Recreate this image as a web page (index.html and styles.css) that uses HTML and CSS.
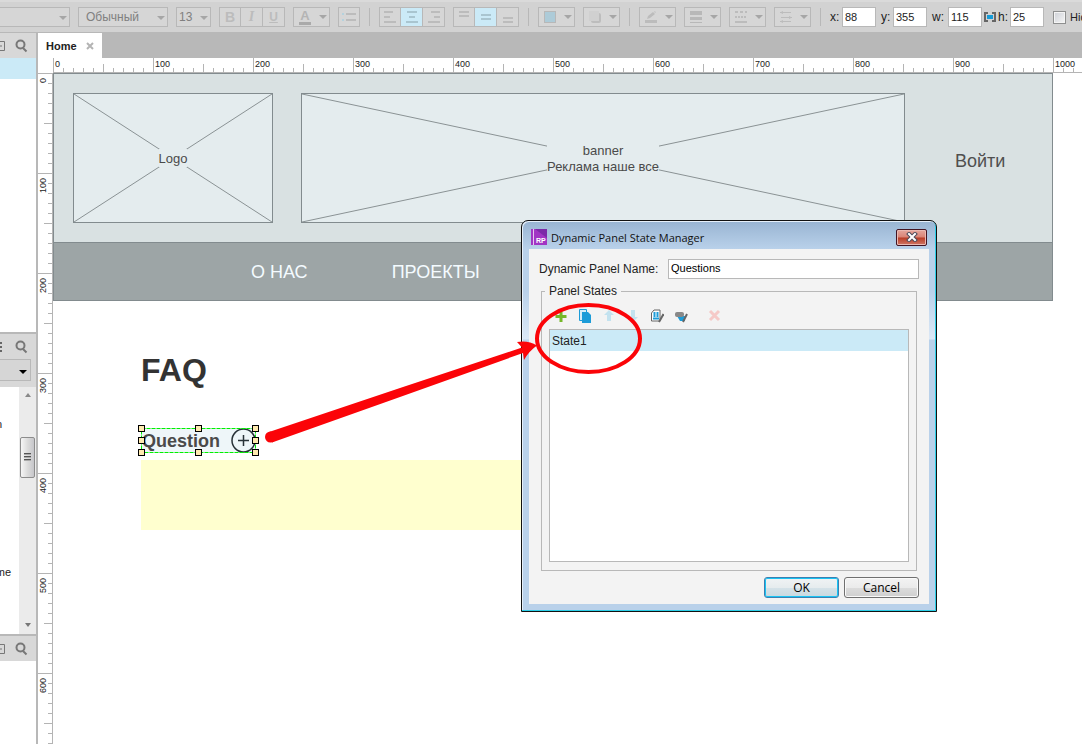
FILE: index.html
```html
<!DOCTYPE html>
<html lang="ru">
<head>
<meta charset="utf-8">
<title>Home</title>
<link rel="stylesheet" href="styles.css">
</head>
<body>
<header class="toolbar">
  <div class="dropdown dropdown-first"><select aria-label="Font"><option></option></select></div>
  <div class="dropdown dropdown-weight"><select aria-label="Weight"><option>Обычный</option></select></div>
  <div class="dropdown dropdown-size"><select aria-label="Size"><option>13</option></select></div>
  <div class="group">
    <button class="tool bold" aria-label="Bold">B</button>
    <button class="tool italic" aria-label="Italic">I</button>
    <button class="tool underline" aria-label="Underline">U</button>
  </div>
  <button class="menu-button" aria-label="Text color"><span class="font-color">A</span></button>
  <div class="group"><button class="tool" aria-label="Bullets"><svg width="14" height="12"><path d="M4 3h10M4 9h10" class="gray"/><path d="M0 3h2M0 9h2" class="blue"/></svg></button></div>
  <span class="divider"></span>
  <div class="group">
    <button class="tool" aria-label="Align left"><svg width="12" height="12"><path d="M0 1h9M0 6h6M0 11h12" class="gray"/></svg></button>
    <button class="tool active" aria-label="Align center"><svg width="12" height="12"><path d="M1 1h10M3 6h6M0 11h12" class="gray"/></svg></button>
    <button class="tool" aria-label="Align right"><svg width="12" height="12"><path d="M3 1h9M6 6h6M0 11h12" class="gray"/></svg></button>
  </div>
  <div class="group">
    <button class="tool" aria-label="Align top"><svg width="12" height="12"><path d="M1 1h10M1 5h10" class="gray"/></svg></button>
    <button class="tool active" aria-label="Align middle"><svg width="12" height="12"><path d="M1 4h10M1 8h10" class="gray"/></svg></button>
    <button class="tool" aria-label="Align bottom"><svg width="12" height="12"><path d="M1 7h10M1 11h10" class="gray"/></svg></button>
  </div>
  <span class="divider"></span>
  <button class="menu-button" aria-label="Fill"><svg width="14" height="12"><rect x="1.500" y=".5" width="11" height="11" fill="#adcbd8" stroke="#b8b8b8"/></svg></button>
  <button class="menu-button" aria-label="Shadow"><svg width="14" height="12"><rect x="3" y="2" width="10" height="10" rx="2" fill="#bdbdbd"/><rect x="1" y="0" width="10" height="10" fill="#d0d0d0"/></svg></button>
  <span class="divider"></span>
  <button class="menu-button" aria-label="Line color"><svg width="14" height="12"><path d="M1 9h12v3H1z" fill="#bcbcbc"/><path d="M3 8l1-3 5-4 2 2-5 4zM10 0l2 1-1 1z" fill="#bcbcbc"/></svg></button>
  <button class="menu-button" aria-label="Line width"><svg width="14" height="12"><path d="M1 0h12v4H1zM1 6h12v3H1zM1 11h12v1H1z" fill="#b8b8b8"/></svg></button>
  <button class="menu-button" aria-label="Line style"><svg width="14" height="12"><path d="M1 1h12" class="gray" stroke-dasharray="3 2"/><path d="M1 6h12" class="gray" stroke-dasharray="2 1"/><path d="M1 11h12" class="gray"/></svg></button>
  <button class="menu-button" aria-label="Arrow style"><svg width="14" height="12"><path d="M1 1.500h11M2 6.500h11M1 10.500h11" stroke="#bcbcbc"/><path d="M4 0v3L1 1.500zM10 5v3l3-1.500zM4 9v3l-3-1.500z" fill="#bcbcbc"/></svg></button>
  <span class="divider"></span>
  <div class="fields">
    <label class="field"><span class="key">x:</span><input value="88"></label>
    <label class="field"><span class="key">y:</span><input value="355"></label>
    <div class="linked">
      <label class="field"><span class="key wide">w:</span><input value="115"></label>
      <svg width="12" height="10"><path d="M4 1H1v8h3M8 1h3v8H8" fill="none" stroke="#666" stroke-width="2"/><rect x="3" y="3" width="6" height="4" fill="#159bd7"/></svg>
      <label class="field"><span class="key">h:</span><input value="25"></label>
    </div>
    <label class="check"><input type="checkbox">Hid</label>
  </div>
</header>
<div class="main">
  <aside class="sidebar">
    <section class="panel panel-pages">
      <div class="panel-head"><svg class="head-icon" width="5" height="10"><path d="M0 .5h4.500v9H0M0 5h2" fill="none" stroke="#777"/></svg><svg width="13" height="14"><circle cx="5.500" cy="5.500" r="4" class="lens"/><path d="M8 9l3.500 3.500" class="lens"/></svg></div>
      <div class="selected-page"></div>
    </section>
    <section class="panel panel-library">
      <div class="panel-head"><svg class="head-icon" width="5" height="10"><path d="M0 1h2M0 5h2M0 9h2" stroke="#666" stroke-width="2"/></svg><svg width="13" height="14"><circle cx="5.500" cy="5.500" r="4" class="lens"/><path d="M8 9l3.500 3.500" class="lens"/></svg></div>
      <div class="library-picker"><div class="dropdown dropdown-library"><select aria-label="Library"><option></option></select></div></div>
      <div class="library">
        <div class="library-items"><span class="first-item">n</span><span>me</span></div>
        <div class="scrollbar"><span class="arrow-up"></span><span class="thumb"><svg width="8" height="9"><path d="M0 .5h7M0 3.500h7M0 6.500h7" stroke="#555"/><path d="M0 1.500h7M0 4.500h7M0 7.500h7" stroke="#aaa"/></svg></span><span class="arrow-down"></span></div>
      </div>
    </section>
    <section class="panel panel-masters">
      <div class="panel-head"><svg class="head-icon" width="5" height="10"><path d="M0 .5h4.500v9H0M0 5h2" fill="none" stroke="#777"/></svg><svg width="13" height="14"><circle cx="5.500" cy="5.500" r="4" class="lens"/><path d="M8 9l3.500 3.500" class="lens"/></svg></div>
    </section>
  </aside>
  <main class="workspace">
    <div class="tabs"><div class="tab">Home<button class="tab-close" aria-label="Close tab"><svg width="8" height="8"><path d="M1 1l6 6M7 1L1 7" stroke="#b4b4b4" stroke-width="2"/></svg></button></div></div>
    <div class="ruler-x"><span>0</span><span>100</span><span>200</span><span>300</span><span>400</span><span>500</span><span>600</span><span>700</span><span>800</span><span>900</span><span>1000</span></div>
    <div class="stage">
      <div class="ruler-y"><span>0</span><span>100</span><span>200</span><span>300</span><span>400</span><span>500</span><span>600</span></div>
      <div class="canvas">
        <div class="node site-header"></div>
        <div class="node placeholder logo"><svg class="cross" viewBox="0 0 100 100" preserveAspectRatio="none"><path d="M0 0L100 100M100 0L0 100"/></svg><p>Logo</p></div>
        <div class="node placeholder banner"><svg class="cross" viewBox="0 0 100 100" preserveAspectRatio="none"><path d="M0 0L100 100M100 0L0 100"/></svg><p>banner<br>Реклама наше все</p></div>
        <a class="node login" href="#">Войти</a>
        <nav class="node site-nav"><a href="#">О НАС</a><a href="#">ПРОЕКТЫ</a></nav>
        <h1 class="node faq">FAQ</h1>
        <div class="node answer"></div>
        <div class="node question"><span>Question</span>
          <svg width="25" height="25"><circle cx="12.500" cy="12.500" r="11.500" fill="none" stroke="#283238" stroke-width="1.500"/><path d="M7 12.500h11M12.500 7v11" stroke="#283238" stroke-width="1.500"/></svg>
          <svg class="selection" width="123" height="33"><rect x="4.500" y="4.500" width="114" height="24" fill="none" stroke="#00f000" stroke-dasharray="4 1"/><g fill="#ffeab0" stroke="#000"><rect x="1.500" y="1.500" width="6" height="6"/><rect x="58.500" y="1.500" width="6" height="6"/><rect x="115.500" y="1.500" width="6" height="6"/><rect x="1.500" y="13.500" width="6" height="6"/><rect x="115.500" y="13.500" width="6" height="6"/><rect x="1.500" y="25.500" width="6" height="6"/><rect x="58.500" y="25.500" width="6" height="6"/><rect x="115.500" y="25.500" width="6" height="6"/></g></svg>
        </div>
      </div>
    </div>
  </main>
</div>
<div class="dialog" role="dialog" aria-labelledby="dialog-title">
  <div class="title-bar">
    <svg width="16" height="16"><path d="M0 0h16v16H0z" fill="#a135c4"/><path d="M4 0h12v9z" fill="#7c2aa8"/><path d="M2.500 0v16" stroke="#e6c6f0"/><text x="5" y="14" class="rp">RP</text></svg>
    <h2 id="dialog-title">Dynamic Panel State Manager</h2>
    <button class="close" aria-label="Close"><svg width="12" height="10"><path d="M3 2l6 6M9 2L3 8" stroke="#4d4a58" stroke-width="4" stroke-linecap="square"/><path d="M3 2l6 6M9 2L3 8" stroke="#fff" stroke-width="2" stroke-linecap="square"/></svg></button>
  </div>
  <div class="dialog-body">
    <div class="name-row"><label for="panel-name">Dynamic Panel Name:</label><input id="panel-name" value="Questions"></div>
    <fieldset>
      <legend>Panel States</legend>
      <div class="state-tools">
        <button aria-label="Add"><svg width="14" height="14"><path d="M7 2v11M1.500 7.500h11" stroke="#76b82a" stroke-width="3"/></svg></button>
        <button aria-label="Duplicate"><svg width="14" height="14"><path d="M1.500 .5h7v11h-7z" fill="#d8eef8" stroke="#1d9cd8"/><path d="M4 3h6l3 3v8H4z" fill="#1d9cd8"/></svg></button>
        <button aria-label="Move up"><svg width="14" height="14"><path d="M7 1l5 5H9v6H5V6H2z" fill="#c3e2ef"/></svg></button>
        <button aria-label="Move down"><svg width="14" height="14"><path d="M7 13l5-5H9V1H5v7H2z" fill="#c3e2ef"/></svg></button>
        <button aria-label="Edit state"><svg width="14" height="14"><path d="M1.500 4l2.500-3h6v11h-8.500z" fill="#fff" stroke="#666"/><path d="M4.500 3v5M7.500 3v5M3 9.500h6" stroke="#1d9cd8" stroke-width="2"/><path d="M9 13l4.500-8" stroke="#666" stroke-width="2"/></svg></button>
        <button aria-label="Edit all states"><svg width="14" height="14"><path d="M3 7h8v5H6z" fill="#1d9cd8"/><rect x="1" y="3" width="9" height="5" rx="2" fill="#888"/><path d="M9 13l4-8" stroke="#666" stroke-width="2"/></svg></button>
        <button class="remove" aria-label="Remove"><svg width="14" height="14"><path d="M3 2l9 9M12 2l-9 9" stroke="#f5c9c7" stroke-width="3"/></svg></button>
      </div>
      <div class="states" role="listbox"><div class="state" role="option" aria-selected="true">State1</div></div>
    </fieldset>
    <div class="actions"><button class="primary">OK</button><button>Cancel</button></div>
  </div>
</div>
<svg class="annotation" width="400" height="150"><g fill="#fb0408"><circle cx="10.500" cy="137" r="5.500"/><path d="M9 132L140 88 262 47.500 257 42Q268 40 277 45.500Q269 51 264 60L263 53 140 97 12 142.500z"/></g><ellipse cx="328.500" cy="38.500" rx="51.500" ry="33.500" fill="none" stroke="#fb0408" stroke-width="4"/></svg>
</body>
</html>
```
FILE: styles.css
```css
* { box-sizing: border-box; }
body { margin: 0; height: 100vh; display: flex; flex-direction: column; overflow: hidden; background: #fff; font: 12px/14px "Liberation Sans", Arial, sans-serif; color: #222; position: relative; }
button, input, select { font: inherit; color: inherit; margin: 0; padding: 0; border-radius: 0; }
button { display: flex; align-items: center; justify-content: center; border: 0; background: none; }
h1, h2, p { margin: 0; }
a { text-decoration: none; }
svg { display: block; flex: none; }

.toolbar { flex: none; height: 32px; display: flex; align-items: center; gap: 8px; background: #d2d2d2; border-top: 2px solid #dadada; white-space: nowrap; }
.toolbar > * { flex: none; }
.dropdown { position: relative; height: 20px; border: 1px solid #b8b8b8; background: #d6d6d6; color: #808080; }
.dropdown select { width: 100%; height: 100%; appearance: none; border: 0; background: none; padding-left: 7px; }
.dropdown::after, .menu-button::after { content: ""; border: 4px solid transparent; border-top-color: #a6a6a6; border-bottom: 0; }
.dropdown::after { position: absolute; right: 2px; top: 8px; pointer-events: none; }
.dropdown-first { width: 70px; border-left: 0; }
.dropdown-weight { width: 90px; }
.dropdown-size { width: 35px; }
.dropdown-size select { padding-left: 2px; }
.group { height: 20px; display: flex; border: 1px solid #b8b8b8; background: #d6d6d6; }
.tool { width: 20px; color: #bcbcbc; }
.tool + .tool { width: 22px; border-left: 1px solid #b8b8b8; }
.tool.active { background: #cbeaf7; }
.tool.active .gray { stroke: #a9c5d0; }
.tool .gray, .menu-button .gray { stroke: #bcbcbc; stroke-width: 2; fill: none; }
.blue { stroke: #b4d2de; stroke-width: 2; }
.bold { font-weight: bold; font-size: 14px; }
.italic { font: italic bold 14px "Liberation Serif", serif; }
.underline { font-weight: bold; text-decoration: underline; }
.menu-button { width: 37px; height: 20px; justify-content: space-between; padding: 0 2px 0 4px; border: 1px solid #b8b8b8; background: #d6d6d6; }
.font-color { width: 12px; margin-left: 1px; border-bottom: 3px solid #aaa; color: #b4b4b4; font-weight: bold; font-size: 13px; line-height: 12px; }
.divider { width: 1px; height: 18px; margin: 0 1px; background: #b8b8b8; }
.fields, .linked, .field, .check { display: flex; align-items: center; }
.fields { gap: 5px; }
.linked { gap: 2px; }
.key { width: 12px; }
.key.wide { width: 16px; }
.field input { width: 34px; height: 20px; border: 1px solid #b8b8b8; padding-left: 2px; background: #fff; font-size: 11px; }
.check { gap: 4px; margin-left: 4px; font-size: 11px; }
.check input { appearance: none; width: 13px; height: 13px; border: 1px solid #8e8f8f; background: linear-gradient(135deg, #cdd0d6, #f6f6f6); box-shadow: inset 0 0 0 1px #f4f4f4; }

.main { flex: 1; min-height: 0; display: flex; }
.sidebar { width: 38px; flex: none; display: flex; flex-direction: column; border-right: 2px solid #b8b8b8; }
.panel { border-top: 2px solid #b8b8b8; display: flex; flex-direction: column; }
.panel-pages { height: 300px; border-top-width: 1px; }
.panel-library { height: 302px; }
.panel-head { flex: none; height: 25px; display: flex; align-items: center; justify-content: space-between; padding: 0 8px 0 0; background: #d8d8d8; }
.lens { fill: none; stroke: #777; stroke-width: 2; }
.selected-page { height: 21px; background: #cbeaf7; }
.library-picker { height: 28px; background: #d8d8d8; }
.dropdown-library { width: 31px; height: 22px; border-left: 0; }
.dropdown-library::after { border-top-color: #000; right: 3px; top: 10px; }
.library { flex: 1; display: flex; justify-content: space-between; overflow: hidden; }
.library-items { width: 12px; display: flex; flex-direction: column; align-items: flex-end; font-size: 11px; padding: 30px 1px 0 0; gap: 134px; }
.library-items .first-item { padding-right: 9px; }
.scrollbar { width: 17px; display: flex; flex-direction: column; align-items: center; background: #ebebeb; padding: 6px 0 7px; }
.arrow-up { border: 3px solid transparent; border-bottom: 4px solid #888; border-top: 0; }
.arrow-down { border: 3px solid transparent; border-top: 4px solid #777; border-bottom: 0; margin-top: auto; }
.thumb { width: 15px; height: 41px; margin-top: 40px; display: flex; align-items: center; justify-content: center; border: 1px solid #8c8c8c; border-radius: 2px; background: linear-gradient(to right, #f6f6f6, #dcdcdc 50%, #c6c6ca); }

.workspace { flex: 1; min-width: 0; display: flex; flex-direction: column; }
.tabs { height: 26px; flex: none; background: #b8b8b8; display: flex; }
.tab { display: flex; align-items: center; gap: 9px; padding: 1px 8px 0; background: #fff; border-top: 1px solid #b8b8b8; font-weight: bold; font-size: 11px; }
.ruler-x { height: 15px; flex: none; margin-left: 15px; display: flex; overflow: hidden; border-bottom: 1px solid #b4b4b4; background: linear-gradient(to right, #b4b4b4 1px, transparent 1px) 0 100% / 10px 4px repeat-x, linear-gradient(to right, #b4b4b4 1px, transparent 1px) 0 100% / 50px 8px repeat-x, linear-gradient(to right, #b4b4b4 1px, transparent 1px) 0 100% / 100px 14px repeat-x; }
.ruler-x span { flex: none; width: 100px; padding-left: 2px; font-size: 9px; line-height: 12px; }
.stage { flex: 1; min-height: 0; display: flex; }
.ruler-y { width: 15px; flex: none; overflow: hidden; border-right: 1px solid #b4b4b4; background: linear-gradient(#b4b4b4 1px, transparent 1px) 100% 0 / 4px 10px repeat-y, linear-gradient(#b4b4b4 1px, transparent 1px) 100% 0 / 8px 50px repeat-y, linear-gradient(#b4b4b4 1px, transparent 1px) 100% 0 / 14px 100px repeat-y; }
.ruler-y span { display: block; width: 11px; height: 100px; padding-bottom: 5px; writing-mode: vertical-rl; transform: rotate(180deg); text-align: right; font-size: 9px; line-height: 11px; }

.canvas { flex: 1; position: relative; overflow: hidden; color: #4a4a4a; }
.node { position: absolute; }
.site-header { left: 0; top: 0; width: 1000px; height: 170px; background: #d9e1e2; border: 1px solid #828b8e; }
.placeholder { top: 20px; height: 130px; display: grid; place-items: center; background: #e4ecee; border: 1px solid #828b8e; font-size: 13px; line-height: 16px; text-align: center; }
.logo { left: 20px; width: 200px; }
.banner { left: 248px; width: 604px; }
.cross { position: absolute; inset: 0; width: 100%; height: 100%; }
.cross path { stroke: #8a9294; vector-effect: non-scaling-stroke; }
.placeholder p { position: relative; padding-top: 2px; background: #e4ecee; }
.login { left: 902px; top: 78px; font-size: 18px; line-height: 20px; color: #4f4f4f; }
.site-nav { left: 0; top: 169px; width: 1000px; height: 59px; display: flex; align-items: center; gap: 84px; padding-left: 197px; background: #9da5a6; border: 1px solid #828b8e; font-size: 18px; }
.site-nav a { color: #f4fbff; }
.faq { left: 88px; top: 279px; font-size: 32px; line-height: 36px; color: #333; }
.answer { left: 88px; top: 387px; width: 780px; height: 70px; background: #ffffcf; }
.question { left: 88px; top: 355px; width: 115px; height: 25px; display: flex; align-items: center; justify-content: space-between; background: #eef6f9; font-size: 18px; line-height: 25px; font-weight: bold; }
.question span { padding: 2px 0 0 1px; }
.selection { position: absolute; left: -4px; top: -4px; }

.dialog { position: absolute; left: 521px; top: 220px; width: 416px; padding: 0 7px 7px; border: 1px solid #111; border-radius: 7px 7px 0 0; background: linear-gradient(#98b4d2, #b9d1ea 28px, #b9d1ea 70px, #dbe8f6 118px, #b9d1ea 119px); box-shadow: inset -1px -1px #2ccfe8, inset 1px 1px #e6f0fa; }
.title-bar { height: 28px; display: flex; align-items: center; padding: 4px 2px 0; gap: 4px; }
.title-bar h2 { flex: 1; padding-top: 1px; font: 11px/16px "Open Sans", sans-serif; color: #111; }
.rp { font: bold 7px "Liberation Sans", sans-serif; fill: #fff; }
.close { width: 31px; height: 17px; border: 1px solid #431422; border-radius: 2px; background: linear-gradient(#e5a79d, #d98375 48%, #b83c25 52%, #d07766); box-shadow: inset 0 0 0 1px #eab9b2; }
.dialog-body { padding: 10px 10px 6px; background: #f3f3f3; }
.name-row { display: flex; align-items: center; gap: 6px; }
.name-row label { width: 123px; white-space: nowrap; }
.name-row input { flex: 1; min-width: 0; height: 20px; border: 1px solid #b8b8b8; padding: 0 2px 2px; background: #fff; color: #000; font-size: 11px; }
fieldset { margin: 5px 2px 0; padding: 0 7px 8px; border: 1px solid #b8b8b8; min-width: 0; }
legend { margin-left: -4px; padding: 0 4px; }
.state-tools { display: flex; padding: 11px 0 6px; }
.state-tools button { width: 24px; height: 14px; }
.state-tools .remove { margin-left: 9px; }
.states { height: 233px; border: 1px solid #b8b8b8; background: #fff; }
.state { padding: 4px 2px 2px; line-height: 15px; background: #cbeaf7; }
.actions { display: flex; justify-content: flex-end; gap: 5px; margin-top: 6px; }
.actions button { width: 75px; height: 21px; border: 1px solid #707070; border-radius: 3px; background: linear-gradient(#f3f3f3, #ebebeb 50%, #dcdcdc 51%, #cfcfcf); box-shadow: inset 0 0 0 1px #fafafa; font-family: "Open Sans", sans-serif; color: #000; }
.actions .primary { border-color: #3c7fb1; background: linear-gradient(#f0f3f4, #e6ecee 50%, #d5e2e8 51%, #c8d8df); box-shadow: inset 0 0 0 1px #18c3f3; }
.annotation { position: absolute; left: 260px; top: 300px; pointer-events: none; }
```
